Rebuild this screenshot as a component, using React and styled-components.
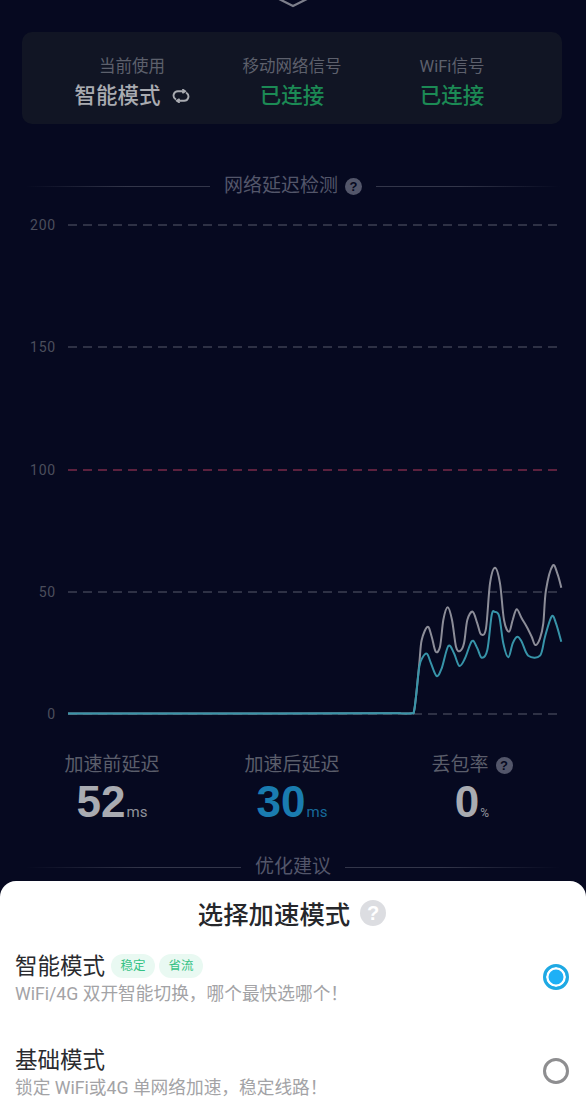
import React from "react";
import styled, { createGlobalStyle } from "styled-components";

const FONT = `Roboto, "Noto Sans CJK SC", sans-serif`;

// traced from the reference, in page pixels after toPage()
const BEFORE = [[0,490],[60,490],[96,490],[102,484],[108,440],[118,340],[125,270],[143,230],[155,260],[167,305],[180,290],[190,210],[203,172],[216,210],[228,290],[240,303],[252,280],[262,210],[278,185],[292,220],[303,253],[318,235],[330,100],[345,53],[360,100],[372,210],[387,245],[398,210],[410,178],[425,205],[440,230],[455,260],[466,285],[480,265],[490,220],[498,120],[518,47],[532,70],[544,113]];
const AFTER = [[0,490],[60,490],[96,490],[102,484],[108,440],[118,350],[128,322],[141,311],[153,340],[170,378],[185,355],[205,288],[222,310],[238,348],[255,325],[276,273],[292,295],[305,323],[322,300],[335,195],[345,186],[358,200],[370,280],[385,322],[398,280],[412,260],[425,275],[445,317],[480,317],[495,260],[515,199],[528,220],[544,275]];
const GRID = [
  { label: "200", y: 225 },
  { label: "150", y: 347 },
  { label: "100", y: 470, color: "#7a2a48" },
  { label: "50", y: 592 },
  { label: "0", y: 714 },
];

function toPage([x, y]) {
  return [380 + x / 3, 550 + y / 3];
}

function smoothPath(points) {
  const p = [[68, 713.5], [200, 713.5], ...points.map(toPage)];
  let d = `M${p[0][0]} ${p[0][1]}`;
  for (let i = 0; i < p.length - 1; i++) {
    const a = p[i - 1] || p[i];
    const b = p[i];
    const c = p[i + 1];
    const e = p[i + 2] || c;
    const c1 = [b[0] + (c[0] - a[0]) / 6, b[1] + (c[1] - a[1]) / 6];
    const c2 = [c[0] - (e[0] - b[0]) / 6, c[1] - (e[1] - b[1]) / 6];
    d += ` C${c1[0].toFixed(1)} ${c1[1].toFixed(1)} ${c2[0].toFixed(1)} ${c2[1].toFixed(1)} ${c[0].toFixed(1)} ${c[1].toFixed(1)}`;
  }
  return d;
}

function LatencyChart() {
  return (
    <ChartSvg viewBox="0 205 586 530">
      {GRID.map((g) => (
        <g key={g.label}>
          <text x="56" y={g.y + 5} textAnchor="end" fontSize="14" letterSpacing="0.8" fill="#4b4e5c" fontFamily="Roboto, sans-serif">
            {g.label}
          </text>
          <line x1="68" x2="562" y1={g.y} y2={g.y} stroke={g.color || "#3d3f52"} strokeWidth="1.4" strokeDasharray="9 6" />
        </g>
      ))}
      <path d={smoothPath(BEFORE)} fill="none" stroke="#8c8d98" strokeWidth="2" />
      <path d={smoothPath(AFTER)} fill="none" stroke="#3794a9" strokeWidth="2" />
    </ChartSvg>
  );
}

function SwitchIcon() {
  return (
    <svg width="18" height="14" viewBox="0 0 18 14" fill="none" stroke="#a9abb1" strokeWidth="1.9" strokeLinecap="round">
      <path d="M12.5 2.2H6a4.3 4.3 0 0 0-2.6 7.8" />
      <path d="M5.5 11.8H12a4.3 4.3 0 0 0 2.6-7.8" />
      <path d="M11 .8l2 1.4-2 1.4" />
      <path d="M7 10.4l-2 1.4 2 1.4" />
    </svg>
  );
}

export default function App() {
  return (
    <Page>
      <GlobalStyle />
      <TopMark>
        <svg width="36" height="8" viewBox="0 0 36 8" fill="none" stroke="#7d7f8b" strokeWidth="2.2">
          <path d="M2 -2L18 6L34 -2" />
        </svg>
      </TopMark>

      <StatusCard>
        <StatusCol>
          <StatusLabel>当前使用</StatusLabel>
          <StatusValue>
            智能模式
            <SwitchIcon />
          </StatusValue>
        </StatusCol>
        <StatusCol>
          <StatusLabel>移动网络信号</StatusLabel>
          <StatusValue $ok>已连接</StatusValue>
        </StatusCol>
        <StatusCol>
          <StatusLabel>WiFi信号</StatusLabel>
          <StatusValue $ok>已连接</StatusValue>
        </StatusCol>
      </StatusCard>

      <SectionTitle $top={50}>
        <Rule />
        <SectionText>
          网络延迟检测
          <Help $size={17}>?</Help>
        </SectionText>
        <Rule $right />
      </SectionTitle>

      <LatencyChart />

      <Stats>
        <Stat>
          <StatLabel>加速前延迟</StatLabel>
          <StatValue>
            <Num>52</Num>
            <Unit>ms</Unit>
          </StatValue>
        </Stat>
        <Stat>
          <StatLabel>加速后延迟</StatLabel>
          <StatValue $blue>
            <Num>30</Num>
            <Unit>ms</Unit>
          </StatValue>
        </Stat>
        <Stat>
          <StatLabel>
            丢包率
            <Help $size={17}>?</Help>
          </StatLabel>
          <StatValue>
            <Num>0</Num>
            <Unit $small>%</Unit>
          </StatValue>
        </Stat>
      </Stats>

      <SectionTitle $top={30}>
        <Rule />
        <SectionText>优化建议</SectionText>
        <Rule $right />
      </SectionTitle>

      <Sheet>
        <SheetTitle>
          选择加速模式
          <Help $size={26} $light>?</Help>
        </SheetTitle>
        <ModeRow>
          <ModeText>
            <ModeName>
              智能模式
              <Tag>稳定</Tag>
              <Tag>省流</Tag>
            </ModeName>
            <ModeDesc>WiFi/4G 双开智能切换，哪个最快选哪个！</ModeDesc>
          </ModeText>
          <Radio $checked />
        </ModeRow>
        <ModeRow $top={39}>
          <ModeText>
            <ModeName>基础模式</ModeName>
            <ModeDesc>锁定 WiFi或4G 单网络加速，稳定线路！</ModeDesc>
          </ModeText>
          <Radio />
        </ModeRow>
      </Sheet>
    </Page>
  );
}

const GlobalStyle = createGlobalStyle`
  html, body { margin: 0; padding: 0; background: #060920; }
  * { box-sizing: border-box; }
`;

const Page = styled.div`
  position: relative;
  width: 586px;
  height: 1104px;
  overflow: hidden;
  background: #060920;
  font-family: ${FONT};
`;

const TopMark = styled.div`
  height: 32px;
  display: flex;
  justify-content: center;
  align-items: flex-start;

  svg { display: block; }
`;

const StatusCard = styled.div`
  width: 540px;
  height: 92px;
  margin-left: 22px;
  padding-top: 23px;
  border-radius: 10px;
  background: #111524;
  display: grid;
  grid-template-columns: repeat(3, 160px);
  justify-content: center;
  align-content: start;
`;

const StatusCol = styled.div`
  display: flex;
  flex-direction: column;
  align-items: center;
  gap: 2px;
`;

const StatusLabel = styled.div`
  font-size: 16.5px;
  line-height: 24px;
  color: #5d606c;
`;

const StatusValue = styled.div`
  display: flex;
  align-items: center;
  gap: 11px;
  font-size: 21.5px;
  line-height: 30px;
  font-weight: 500;
  color: ${(p) => (p.$ok ? "#1c8a55" : "#a9abb1")};
`;

const SectionTitle = styled.div`
  display: flex;
  align-items: center;
  gap: 14px;
  height: 24px;
  margin-top: ${(p) => p.$top}px;
  padding: 0 26px;
`;

const Rule = styled.div`
  flex: 1;
  height: 1px;
  background: linear-gradient(${(p) => (p.$right ? "to left" : "to right")}, transparent, #33364a 55%);
`;

const SectionText = styled.div`
  display: flex;
  align-items: center;
  gap: 7px;
  font-size: 19px;
  line-height: 24px;
  color: #53566a;
`;

const Help = styled.span`
  flex: none;
  display: inline-flex;
  align-items: center;
  justify-content: center;
  width: ${(p) => p.$size}px;
  height: ${(p) => p.$size}px;
  border-radius: 50%;
  font-family: "Liberation Sans", sans-serif;
  font-weight: 700;
  font-size: ${(p) => Math.round(p.$size * 0.78)}px;
  line-height: 1;
  background: ${(p) => (p.$light ? "#dcdde1" : "#53566a")};
  color: ${(p) => (p.$light ? "#ffffff" : "#060920")};
`;

const ChartSvg = styled.svg`
  display: block;
  width: 586px;
  height: 530px;
  margin-top: 7px;
`;

const Stats = styled.div`
  display: grid;
  grid-template-columns: repeat(3, 180px);
  justify-content: center;
  margin-top: 17px;
  padding-right: 2px;
`;

const Stat = styled.div`
  display: flex;
  flex-direction: column;
  align-items: center;
`;

const StatLabel = styled.div`
  display: flex;
  align-items: center;
  gap: 7px;
  font-size: 19px;
  line-height: 26px;
  color: #5b5e6b;
`;

const StatValue = styled.div`
  display: flex;
  align-items: baseline;
  height: 46px;
  margin-top: 1px;
  color: ${(p) => (p.$blue ? "#1a7cb0" : "#a9abb1")};
`;

const Num = styled.span`
  font-family: "Liberation Sans", sans-serif;
  font-weight: 700;
  font-size: 44px;
  line-height: 46px;
`;

const Unit = styled.span`
  font-size: ${(p) => (p.$small ? 12 : 15)}px;
  margin-left: 1px;
  opacity: 0.85;
`;

const Sheet = styled.div`
  position: absolute;
  left: 0;
  right: 0;
  bottom: 0;
  height: 223px;
  padding: 18px 17px 0 15px;
  border-radius: 16px 16px 0 0;
  background: #fff;
`;

const SheetTitle = styled.div`
  display: flex;
  align-items: center;
  justify-content: center;
  gap: 10px;
  height: 28px;
  font-size: 25.4px;
  font-weight: 500;
  color: #26272b;
`;

const ModeRow = styled.div`
  display: flex;
  align-items: center;
  justify-content: space-between;
  margin-top: ${(p) => p.$top || 24}px;
`;

const ModeText = styled.div`
  display: flex;
  flex-direction: column;
  gap: 1px;
`;

const ModeName = styled.div`
  display: flex;
  align-items: center;
  gap: 4px;
  font-size: 22.5px;
  line-height: 30px;
  color: #2a2b2f;
`;

const Tag = styled.span`
  display: inline-flex;
  align-items: center;
  justify-content: center;
  width: 44px;
  height: 24px;
  margin-left: 2px;
  border-radius: 12px;
  font-size: 12.5px;
  color: #36c285;
  background: #e9f9f2;

  & + & { margin-left: 0; }
`;

const ModeDesc = styled.div`
  font-size: 17.7px;
  line-height: 24px;
  color: #a3a3a6;
`;

const Radio = styled.span`
  flex: none;
  width: 26px;
  height: 26px;
  margin-bottom: 3px;
  border-radius: 50%;
  border: ${(p) => (p.$checked ? "3.5px solid #1fa9e3" : "3px solid #8e8e90")};
  background: ${(p) => (p.$checked ? "#1eb0f6" : "#fff")};
  box-shadow: ${(p) => (p.$checked ? "inset 0 0 0 2.5px #fff" : "none")};
`;
